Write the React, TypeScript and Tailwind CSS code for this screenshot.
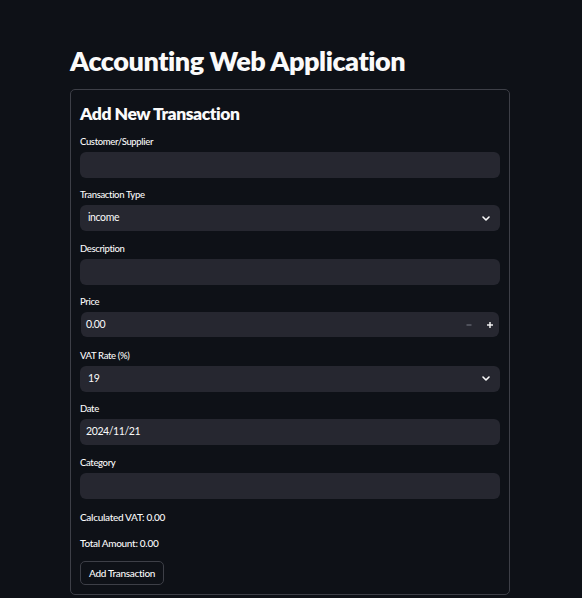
import React from "react";

const font = { fontFamily: "Lato, 'Liberation Sans', sans-serif" };

function Chevron() {
  return (
    <svg width="8" height="5" viewBox="0 0 8 5" className="shrink-0">
      <polyline points="1,1 4,4 7,1" fill="none" stroke="#fafafa" strokeWidth="1.6" strokeLinecap="round" strokeLinejoin="round" />
    </svg>
  );
}

function Label({ children }: { children: React.ReactNode }) {
  return <div className="h-[14px] leading-[14px] text-[9.5px] tracking-[-0.35px] font-medium text-[#fafafa] mb-[3px]">{children}</div>;
}

function TextField({ label, value }: { label: string; value?: string }) {
  return (
    <div>
      <Label>{label}</Label>
      <div className="h-[26px] rounded-[6px] bg-[#262730] flex items-center px-[6px] text-[10.5px] tracking-[-0.4px] text-[#fafafa]">
        {value}
      </div>
    </div>
  );
}

function SelectField({ label, value }: { label: string; value: string }) {
  return (
    <div>
      <Label>{label}</Label>
      <div className="h-[26px] rounded-[6px] bg-[#262730] flex items-center justify-between pl-[8px] pr-[10px] text-[10.5px] tracking-[-0.4px] text-[#fafafa]">
        <span>{value}</span>
        <Chevron />
      </div>
    </div>
  );
}

function NumberField({ label, value }: { label: string; value: string }) {
  return (
    <div>
      <Label>{label}</Label>
      <div className="h-[26px] px-[1px]">
        <div className="h-[25px] rounded-[6px] bg-[#262730] flex items-center justify-between pl-[5px] pr-[6px] text-[10.5px] tracking-[-0.4px] text-[#fafafa]">
          <span>{value}</span>
          <div className="flex items-center gap-[15px]">
            <svg width="6" height="6" viewBox="0 0 6 6">
              <line x1="0.5" y1="3" x2="5.5" y2="3" stroke="#6b6d78" strokeWidth="1.2" />
            </svg>
            <svg width="6" height="6" viewBox="0 0 6 6">
              <line x1="0" y1="3" x2="6" y2="3" stroke="#fafafa" strokeWidth="1.4" />
              <line x1="3" y1="0" x2="3" y2="6" stroke="#fafafa" strokeWidth="1.4" />
            </svg>
          </div>
        </div>
      </div>
    </div>
  );
}

export default function App() {
  return (
    <div className="min-h-[598px] bg-[#0e1117] text-[#fafafa]" style={font}>
      <div className="ml-[70px] w-[440px] pt-[45px] pb-[3px]">
        <h1 className="text-[27px] leading-[1.2] font-extrabold text-[#fafafa] tracking-[-0.45px]">Accounting Web Application</h1>
        <div className="mt-[11.6px] border border-[#3d3f47] rounded-[5px] px-[9px] pt-[13px] pb-[9px]">
          <h2 className="text-[17.5px] leading-[21px] font-extrabold tracking-[-0.45px] text-[#fafafa]">Add New Transaction</h2>
          <div className="mt-[10.8px] flex flex-col gap-[10.5px]">
            <TextField label="Customer/Supplier" />
            <SelectField label="Transaction Type" value="income" />
            <TextField label="Description" />
            <NumberField label="Price" value="0.00" />
            <SelectField label="VAT Rate (%)" value="19" />
            <TextField label="Date" value="2024/11/21" />
            <TextField label="Category" />
          </div>
          <div className="mt-[11px] h-[14px] leading-[14px] text-[10px] tracking-[-0.3px] font-medium">Calculated VAT: 0.00</div>
          <div className="mt-[12px] h-[14px] leading-[14px] text-[10px] tracking-[-0.3px] font-medium">Total Amount: 0.00</div>
          <div className="mt-[11px] flex">
            <button className="h-[24px] px-[8px] rounded-[5px] border border-[#3d3f47] text-[10px] tracking-[-0.3px] font-medium leading-none text-[#fafafa] bg-[#0e1117]">
              Add Transaction
            </button>
          </div>
        </div>
      </div>
    </div>
  );
}
